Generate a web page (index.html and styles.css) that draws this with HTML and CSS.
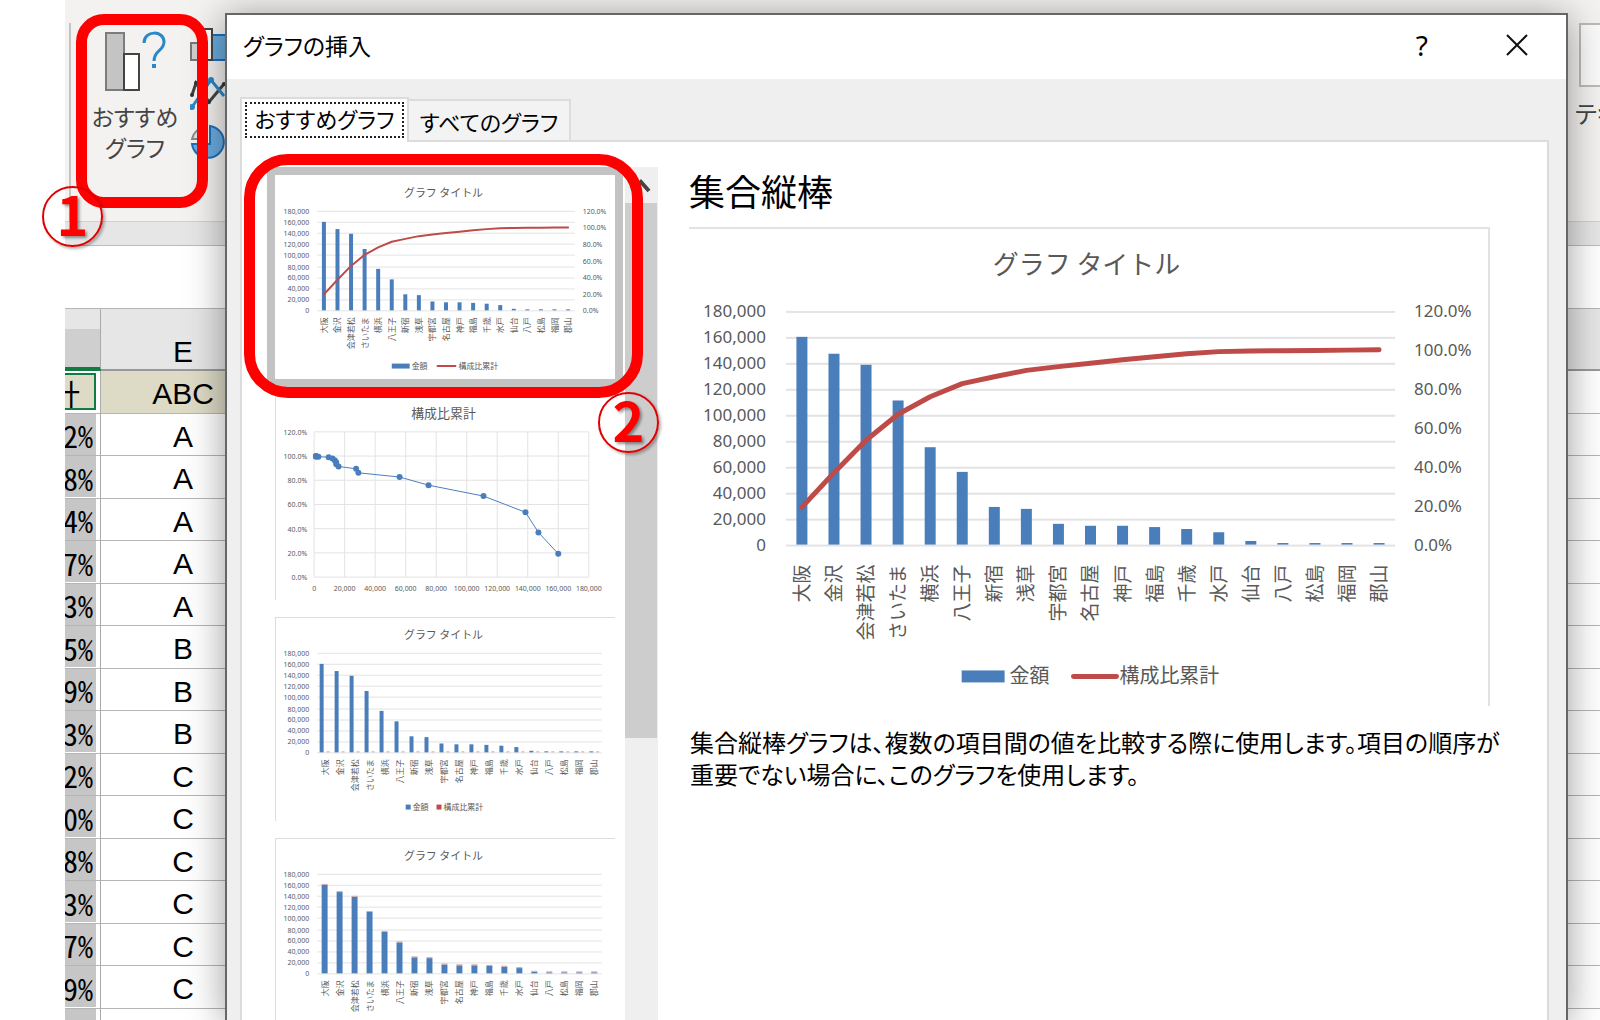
FILE: index.html
```html
<!DOCTYPE html>
<html lang="ja">
<head>
  <meta charset="UTF-8" />
  <title>グラフの挿入</title>
  <link rel="stylesheet" href="styles.css">
</head>
<body>
  <div class="app">
    <div class="ribbon">
      <div class="separator"></div>
      <button class="ribbon-button" type="button">
        <svg width="64" height="62" viewBox="0 0 64 62">
          <rect x="3" y="2" width="18" height="57" fill="#c4c4c4" stroke="#7c7c7c" stroke-width="2"/>
          <rect x="21" y="23" width="15" height="36" fill="#fff" stroke="#444" stroke-width="2"/>
          <path d="M41 12 C41 -1 61 -1 61 11 C61 20 51 19 51 30" fill="none" stroke="#2b88c8" stroke-width="3"/>
          <rect x="49" y="33" width="4" height="4" fill="#2b88c8"/>
        </svg>
        <span>おすすめ</span>
        <span>グラフ</span>
      </button>
      <div class="chart-icons">
        <svg width="40" height="34" viewBox="0 0 40 34">
          <rect x="1" y="15" width="10" height="17" fill="#d0d0d0" stroke="#777" stroke-width="2"/>
          <rect x="22" y="7" width="16" height="25" fill="#6bacdf" stroke="#1e6fb8" stroke-width="2"/>
          <rect x="11" y="1" width="11" height="31" fill="#fff" stroke="#444" stroke-width="2"/>
        </svg>
        <svg width="40" height="34" viewBox="0 0 40 34">
          <path d="M2 19 L6 7 L19 26 L34 8" fill="none" stroke="#444" stroke-width="3"/>
          <path d="M2 31 L21 4 L34 20" fill="none" stroke="#2b88c8" stroke-width="3"/>
          <g fill="#333"><circle cx="2" cy="19" r="2"/><circle cx="6" cy="7" r="2"/><circle cx="19" cy="26" r="2"/><circle cx="34" cy="8" r="2"/></g>
          <g fill="#2b88c8"><circle cx="2" cy="31" r="3"/><circle cx="21" cy="4" r="3"/></g>
        </svg>
        <svg width="40" height="36" viewBox="0 0 40 36">
          <path d="M20 2 A16 16 0 1 1 2 20 L20 20 Z" fill="#6bacdf" stroke="#1e6fb8" stroke-width="2"/>
          <path d="M15 3 A15 15 0 0 0 2 15 L15 15 Z" fill="#ddd" stroke="#888" stroke-width="2"/>
        </svg>
      </div>
      <button class="text-button" type="button">
        <span class="text-box"></span>
        <span>テキスト</span>
      </button>
    </div>
    <div class="band"></div>
    <div class="formula-bar"></div>
    <table class="sheet">
      <thead>
        <tr><th class="col-d"><span></span></th><th class="col-e">E</th><th></th></tr>
      </thead>
      <tbody id="sheetRows"></tbody>
    </table>
  </div>

  <div class="dialog" role="dialog" aria-labelledby="dialogTitle">
    <div class="titlebar">
      <span id="dialogTitle">グラフの挿入</span>
      <button class="help" type="button">?</button>
      <button class="close" type="button" aria-label="閉じる">
        <svg width="24" height="24" viewBox="0 0 24 24"><path d="M2 2 L22 22 M22 2 L2 22" stroke="#111" stroke-width="2"/></svg>
      </button>
    </div>
    <div class="tabs">
      <button class="tab active" type="button"><span>おすすめグラフ</span></button>
      <button class="tab" type="button">すべてのグラフ</button>
    </div>
    <div class="panel">
      <div class="list">
        <button class="thumb selected" type="button"><svg id="thumbCombo" viewBox="0 0 340 204"></svg></button>
        <button class="thumb" type="button"><svg id="thumbScatter" viewBox="0 0 340 204"></svg></button>
        <button class="thumb" type="button"><svg id="thumbBars" viewBox="0 0 340 204"></svg></button>
        <button class="thumb" type="button"><svg id="thumbStacked" viewBox="0 0 340 204"></svg></button>
      </div>
      <div class="scrollbar">
        <svg width="32" height="36" viewBox="0 0 32 36"><path d="M8 24 L16 15 L24 24" fill="none" stroke="#444" stroke-width="4"/></svg>
        <div class="scroll-handle"></div>
      </div>
      <div class="detail">
        <h2>集合縦棒</h2>
        <div class="preview"><svg id="preview" viewBox="0 0 800 478"></svg></div>
        <p>集合縦棒グラフは、複数の項目間の値を比較する際に使用します。項目の順序が<br>重要でない場合に、このグラフを使用します。</p>
      </div>
    </div>
  </div>

  <div class="marker marker-ribbon"></div>
  <div class="marker marker-thumb"></div>
  <div class="number number-one">1</div>
  <div class="number number-two">2</div>

  <script>
    const data = [
      ["大阪", 160000], ["金沢", 147000], ["会津若松", 138500], ["さいたま", 111000],
      ["横浜", 75000], ["八王子", 56000], ["新宿", 29000], ["浅草", 27500],
      ["宇都宮", 16000], ["名古屋", 14500], ["神戸", 14500], ["福島", 13500],
      ["千歳", 12000], ["水戸", 9500], ["仙台", 2800], ["八戸", 1200],
      ["松島", 1200], ["福岡", 1200], ["郡山", 1200]
    ];
    const total = data.reduce((sum, d) => sum + d[1], 0);
    let running = 0;
    const ratios = data.map(d => (running += d[1]) / total * 100);

    const BLUE = "#4a7ebb";
    const RED = "#be4b48";
    const GRID = "#e3e3e3";

    function text(x, y, size, value, anchor = "start", extra = "") {
      return `<text x="${x}" y="${y}" font-size="${size}" text-anchor="${anchor}" ${extra}>${value}</text>`;
    }

    function line(x1, y1, x2, y2, color, width) {
      return `<line x1="${x1}" y1="${y1}" x2="${x2}" y2="${y2}" stroke="${color}" stroke-width="${width}"/>`;
    }

    function rect(x, y, w, h, color) {
      return `<rect x="${x}" y="${y}" width="${w}" height="${h}" fill="${color}"/>`;
    }

    // o: plot box, font sizes and the kind of chart ("combo", "bars" or "stacked")
    function drawBars(id, o) {
      const h = o.bottom - o.top;
      const step = (o.right - o.left) / data.length;
      let s = text(o.titleX, o.titleY, o.titleSize, "グラフ タイトル", "middle", 'class="jp"');

      for (let i = 0; i <= 9; i++) {
        const y = Math.round(o.bottom - h * i / 9);
        s += rect(o.left, y, o.right - o.left, o.grid, GRID);
        s += text(o.labelX, y + o.labelDy, o.labelSize, (i * 20000).toLocaleString("en-US"), "end");
      }
      data.forEach((d, i) => {
        const cx = o.left + step * (i + 0.5);
        const bh = Math.max(1, h * d[1] / 180000);
        const x = cx - o.barWidth / 2 - (o.kind === "bars" ? 3 : 0);
        s += rect(x, o.bottom - bh, o.barWidth, bh, BLUE);
        if (o.kind === "bars") s += rect(cx + 2, o.bottom - 1, 3, 1, "#d9a5a4");
        if (o.kind === "stacked") s += rect(x, o.bottom - bh - 1, o.barWidth, 1, "#d9a5a4");
        s += text(0, 0, o.catSize, d[0], "end", `class="jp" transform="translate(${cx + o.catDx} ${o.catY}) rotate(-90)"`);
      });

      if (o.kind === "combo") {
        for (let i = 0; i <= 6; i++) {
          s += text(o.right + o.rightGap, o.bottom - h * i / 6 + o.labelDy, o.labelSize, (i * 20).toFixed(1) + "%");
        }
        const pts = ratios.map((r, i) => `${o.left + step * (i + 0.5)},${o.bottom - h * r / 120}`);
        s += `<polyline points="${pts.join(" ")}" fill="none" stroke="${RED}" stroke-width="${o.lineWidth}" stroke-linecap="round" stroke-linejoin="round"/>`;
      }

      const g = o.legend;
      s += rect(g.x1, g.y - g.h / 2, g.w, g.h, BLUE);
      s += text(g.t1, g.y + g.dy, g.size, "金額", "start", 'class="jp"');
      if (o.kind === "combo") {
        s += `<line x1="${g.x2}" y1="${g.y}" x2="${g.x2 + g.w}" y2="${g.y}" stroke="${RED}" stroke-width="${o.lineWidth}" stroke-linecap="round"/>`;
      } else {
        s += rect(g.x2, g.y - g.h / 2, g.w, g.h, RED);
      }
      s += text(g.t2, g.y + g.dy, g.size, "構成比累計", "start", 'class="jp"');
      document.getElementById(id).innerHTML = s;
    }

    function drawScatter(id) {
      const left = 38, right = 314, top = 35, bottom = 181;
      let s = text(168, 21, 13, "構成比累計", "middle", 'class="jp"');
      for (let i = 0; i <= 6; i++) {
        const y = bottom - (bottom - top) * i / 6;
        s += line(left, y, right, y, GRID, 1);
        s += text(31, y + 3, 7, (i * 20).toFixed(1) + "%", "end");
      }
      for (let i = 0; i <= 9; i++) {
        const x = left + (right - left) * i / 9;
        s += line(x, top, x, bottom, GRID, 1);
        s += text(x, 195, 7, (i * 20000).toLocaleString("en-US"), "middle");
      }
      const pts = data.map((d, i) => [left + (right - left) * d[1] / 180000, bottom - (bottom - top) * ratios[i] / 120]);
      s += `<polyline points="${pts.map(p => p.join(",")).join(" ")}" fill="none" stroke="${BLUE}" stroke-width="1"/>`;
      pts.forEach(p => s += `<circle cx="${p[0]}" cy="${p[1]}" r="3" fill="${BLUE}"/>`);
      document.getElementById(id).innerHTML = s;
    }

    drawBars("preview", {
      kind: "combo", left: 97, right: 707, top: 82, bottom: 316, grid: 2,
      titleX: 398, titleY: 45, titleSize: 26, labelX: 77, labelDy: 6, labelSize: 17, rightGap: 19,
      barWidth: 11, lineWidth: 5, catSize: 19, catY: 336, catDx: 7,
      legend: { x1: 273, t1: 321, x2: 385, t2: 431, y: 448, w: 43, h: 12, dy: 7, size: 20 }
    });
    const thumb = {
      left: 41, right: 327, top: 35, bottom: 135, grid: 1,
      titleX: 168, titleY: 21, titleSize: 11, labelX: 33, labelDy: 3, labelSize: 7, rightGap: 8,
      barWidth: 4, lineWidth: 2, catSize: 8, catY: 142, catDx: 3
    };
    const squares = { x1: 130, t1: 137, x2: 161, t2: 168, y: 190, w: 5, h: 5, dy: 3, size: 8 };
    drawBars("thumbCombo", {
      ...thumb, kind: "combo", right: 300,
      legend: { x1: 116, t1: 136, x2: 162, t2: 183, y: 191, w: 18, h: 5, dy: 3, size: 8 }
    });
    drawScatter("thumbScatter");
    drawBars("thumbBars", { ...thumb, kind: "bars", legend: squares });
    drawBars("thumbStacked", { ...thumb, kind: "stacked", barWidth: 6, legend: squares });

    const rows = [
      ["計", "ABC"], ["2%", "A"], ["8%", "A"], ["4%", "A"], ["7%", "A"], ["3%", "A"],
      ["5%", "B"], ["9%", "B"], ["3%", "B"], ["2%", "C"], ["0%", "C"], ["8%", "C"],
      ["3%", "C"], ["7%", "C"], ["9%", "C"], ["5%", "C"]
    ];
    document.getElementById("sheetRows").innerHTML = rows.map(r =>
      `<tr><td class="col-d"><span>${r[0]}</span></td><td class="col-e">${r[1]}</td><td></td></tr>`).join("");
  </script>
</body>
</html>
```
FILE: styles.css
```css
* {
  box-sizing: border-box;
}

body {
  font-family: "Noto Sans CJK JP", sans-serif;
  font-feature-settings: "palt";
  margin: 0;
  height: 100vh;
  overflow: hidden;
  position: relative;
  background: #fff;
  color: #000;
}

button {
  font: inherit;
  font-feature-settings: inherit;
  color: inherit;
  background: none;
  border: none;
  padding: 0;
  cursor: pointer;
}

svg {
  display: block;
}

/* worksheet behind the dialog */
.app {
  margin-left: 65px;
  height: 100%;
  overflow: hidden;
}

.ribbon {
  display: flex;
  height: 222px;
  background: #f3f2f1;
  border-bottom: 1px solid #d0d0d0;
  overflow: hidden;
}

.separator {
  width: 2px;
  margin: 23px 9px 0 4px;
  background: #c4c4c4;
}

.ribbon-button {
  display: flex;
  flex-direction: column;
  align-items: center;
  width: 110px;
  padding-top: 31px;
  font-size: 23px;
  line-height: 31px;
  color: #444;
}

.ribbon-button svg {
  margin-bottom: 8px;
}

.chart-icons {
  display: flex;
  flex-direction: column;
  gap: 14px;
  padding-top: 28px;
}

.text-button {
  display: flex;
  flex-direction: column;
  width: 25px;
  margin-left: auto;
  padding-top: 23px;
  font-size: 24px;
  line-height: 32px;
  white-space: nowrap;
  color: #444;
}

.text-box {
  width: 64px;
  height: 64px;
  margin: 0 0 10px 4px;
  border: 2px solid #bbb;
  background: #fafafa;
}

.band {
  height: 24px;
  background: #e6e6e6;
  border-bottom: 1px solid #bbb;
}

.formula-bar {
  height: 63px;
  border-bottom: 1px solid #b5b5b5;
}

.sheet {
  width: 100%;
  height: 742px;
  table-layout: fixed;
  border-collapse: separate;
  border-spacing: 0;
  font-family: "Liberation Sans", sans-serif;
  font-size: 30px;
  line-height: 32px;
}

.sheet th {
  height: 62px;
  padding: 26px 0 0;
  background: #e6e6e6;
  border-bottom: 2px solid #999;
  font-weight: normal;
}

.sheet td {
  height: 42px;
  padding: 5px 0 0;
  border-bottom: 1px solid #b5b5b5;
}

.sheet .col-d {
  width: 36px;
  border-right: 1px solid #aaa;
}

.sheet th.col-d {
  padding-top: 20px;
  border-bottom: 4px solid #107c41;
}

.sheet th.col-d span {
  display: block;
  height: 38px;
  background: #cfcfcf;
}

.sheet td.col-d {
  padding: 0 4px 0 0;
  font-family: "Noto Sans CJK JP", sans-serif;
  font-feature-settings: "hwid";
}

.sheet td.col-d span {
  display: flex;
  justify-content: flex-end;
  align-items: center;
  height: 41px;
  padding: 2px 3px 0 0;
  overflow: hidden;
  background: #c6c6c6;
}

.sheet tbody tr:first-child .col-d span {
  height: 37px;
  padding-right: 14px;
  border: 2px solid #107c41;
  border-left: none;
  background: #dddac5;
}

.sheet .col-e {
  width: 164px;
  text-align: center;
}

.sheet tbody tr:first-child .col-e {
  background: #dddac5;
}

/* dialog */
.dialog {
  position: absolute;
  top: 13px;
  left: 225px;
  right: 32px;
  bottom: 0;
  display: flex;
  flex-direction: column;
  border: 2px solid #666;
  border-bottom: none;
  background: #efefef;
  box-shadow: 0 4px 36px rgba(0, 0, 0, 0.4);
  overflow: hidden;
}

.titlebar {
  display: flex;
  align-items: center;
  height: 64px;
  flex-shrink: 0;
  padding: 0 37px 5px 16px;
  background: #fff;
  font-size: 23px;
}

.titlebar .help {
  margin-left: auto;
  font-family: "Noto Sans", sans-serif;
  font-size: 28px;
}

.titlebar .close {
  margin-left: 77px;
}

.tabs {
  display: flex;
  align-items: flex-end;
  flex-shrink: 0;
  padding: 18px 13px 0;
  font-size: 22px;
}

.tab {
  width: 162px;
  height: 41px;
  border: 2px solid #dcdcdc;
  border-bottom: none;
  border-left: none;
  background: #f3f3f3;
  line-height: 32px;
  white-space: nowrap;
}

.tab.active {
  width: 169px;
  height: 45px;
  margin-bottom: -2px;
  padding: 2px 3px 4px;
  border-left: 2px solid #dcdcdc;
  background: #fff;
  z-index: 1;
}

.tab.active span {
  display: block;
  height: 36px;
  border: 2px dotted #222;
  line-height: 28px;
}

.panel {
  display: flex;
  flex: 1;
  min-height: 0;
  margin: 0 17px 0 13px;
  padding-top: 25px;
  border: 2px solid #dcdcdc;
  border-bottom: none;
  background: #fff;
}

.list {
  display: flex;
  flex-direction: column;
  gap: 1px;
  width: 383px;
  flex-shrink: 0;
  padding-left: 25px;
  overflow: hidden;
}

.thumb {
  width: 356px;
  flex-shrink: 0;
  border: 8px solid transparent;
}

.thumb svg {
  width: 340px;
  height: 204px;
  border-top: 1px solid #dcdcdc;
  border-left: 1px solid #dcdcdc;
}

.thumb.selected {
  border-color: #c3c3c3;
}

.thumb.selected svg {
  border-color: #fff;
}

.scrollbar {
  width: 33px;
  flex-shrink: 0;
  background: #efefef;
}

.scroll-handle {
  height: 535px;
  margin-right: 1px;
  background: #cdcdcd;
}

.detail {
  flex: 1;
  padding: 0 57px 0 31px;
}

.detail h2 {
  margin: 0 0 14px;
  font-size: 36px;
  font-weight: normal;
  line-height: 46px;
}

.preview {
  width: 100%;
  max-width: 1000px;
  border-top: 2px solid #e2e2e2;
  border-right: 2px solid #e2e2e2;
}

.preview svg {
  width: 100%;
}

.detail p {
  margin: 20px -40px 0 1px;
  font-size: 24px;
  line-height: 32px;
}

svg text {
  font-family: "Noto Sans", sans-serif;
  fill: #595959;
}

svg text.jp {
  font-family: "Noto Sans CJK JP", sans-serif;
  font-feature-settings: "palt" 0;
}

/* numbered callouts */
.marker {
  position: absolute;
  border: 11px solid #f00;
}

.marker-ribbon {
  top: 14px;
  left: 76px;
  width: 132px;
  height: 194px;
  border-radius: 28px;
}

.marker-thumb {
  top: 154px;
  left: 244px;
  width: 399px;
  height: 244px;
  border-radius: 44px;
}

.number {
  position: absolute;
  width: 61px;
  height: 61px;
  border: 2px solid #e00000;
  border-radius: 50%;
  box-shadow: 2px 2px 3px rgba(0, 0, 0, 0.3);
  color: #f00;
  font-size: 54px;
  font-weight: bold;
  line-height: 50px;
  text-align: center;
  text-shadow: 2px 2px 3px rgba(0, 0, 0, 0.4);
}

.number-one {
  top: 186px;
  left: 42px;
}

.number-two {
  top: 392px;
  left: 598px;
}
```
